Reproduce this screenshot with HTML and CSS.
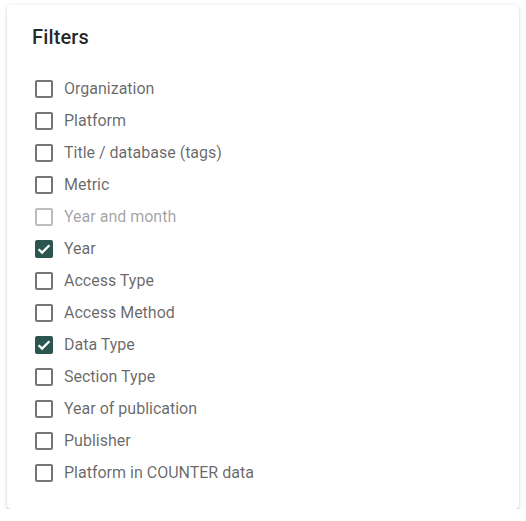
FILE: index.html
```html
<!DOCTYPE html>
<html lang="en">
<head>
<meta charset="utf-8">
<title>Filters</title>
<link rel="stylesheet" href="styles.css">
</head>
<body>
<div class="card">
  <h2 class="title">Filters</h2>
  <ul class="list">
    <li class="row"><span class="box"></span><span class="label">Organization</span></li>
    <li class="row"><span class="box"></span><span class="label">Platform</span></li>
    <li class="row"><span class="box"></span><span class="label">Title / database (tags)</span></li>
    <li class="row"><span class="box"></span><span class="label">Metric</span></li>
    <li class="row disabled"><span class="box"></span><span class="label">Year and month</span></li>
    <li class="row checked"><span class="box"><svg viewBox="0 0 18 18" width="18" height="18"><path d="M3.6 9.2 L7.1 12.6 L14.4 5.3" fill="none" stroke="#fff" stroke-width="2.3"/></svg></span><span class="label">Year</span></li>
    <li class="row"><span class="box"></span><span class="label">Access Type</span></li>
    <li class="row"><span class="box"></span><span class="label">Access Method</span></li>
    <li class="row checked"><span class="box"><svg viewBox="0 0 18 18" width="18" height="18"><path d="M3.6 9.2 L7.1 12.6 L14.4 5.3" fill="none" stroke="#fff" stroke-width="2.3"/></svg></span><span class="label">Data Type</span></li>
    <li class="row"><span class="box"></span><span class="label">Section Type</span></li>
    <li class="row"><span class="box"></span><span class="label">Year of publication</span></li>
    <li class="row"><span class="box"></span><span class="label">Publisher</span></li>
    <li class="row"><span class="box"></span><span class="label">Platform in COUNTER data</span></li>
  </ul>
</div>
</body>
</html>
```
FILE: styles.css
```css
html, body {
  margin: 0;
  padding: 0;
  background: #ffffff;
}
body {
  padding: 5px 7px 0 7px;
  font-family: Roboto, "Liberation Sans", sans-serif;
}
.card {
  width: 512px;
  box-sizing: border-box;
  background: #fff;
  border-radius: 4px;
  box-shadow: 0 3px 1px -2px rgba(0,0,0,.2), 0 2px 2px 0 rgba(0,0,0,.14), 0 1px 5px 0 rgba(0,0,0,.12);
  padding: 16px 25px 20px 25px;
}
.title {
  margin: 0;
  font-size: 20px;
  font-weight: 500;
  line-height: 32px;
  color: rgba(0,0,0,0.87);
  letter-spacing: 0.15px;
}
.list {
  list-style: none;
  margin: 20px 0 0 0;
  padding: 0;
  display: flex;
  flex-direction: column;
}
.row {
  height: 32px;
  display: flex;
  align-items: center;
}
.box {
  width: 18px;
  height: 18px;
  margin: 0 11px 0 3px;
  box-sizing: border-box;
  border: 2px solid #757575;
  border-radius: 2px;
  position: relative;
  flex: none;
}
.box svg {
  position: absolute;
  left: -2px;
  top: -2px;
}
.label {
  font-size: 16px;
  color: rgba(0,0,0,0.6);
  line-height: 20px;
}
.disabled .box {
  border-color: #bdbdbd;
}
.disabled .label {
  color: rgba(0,0,0,0.38);
}
.checked .box {
  background: #2b5650;
  border-color: #2b5650;
}
```
